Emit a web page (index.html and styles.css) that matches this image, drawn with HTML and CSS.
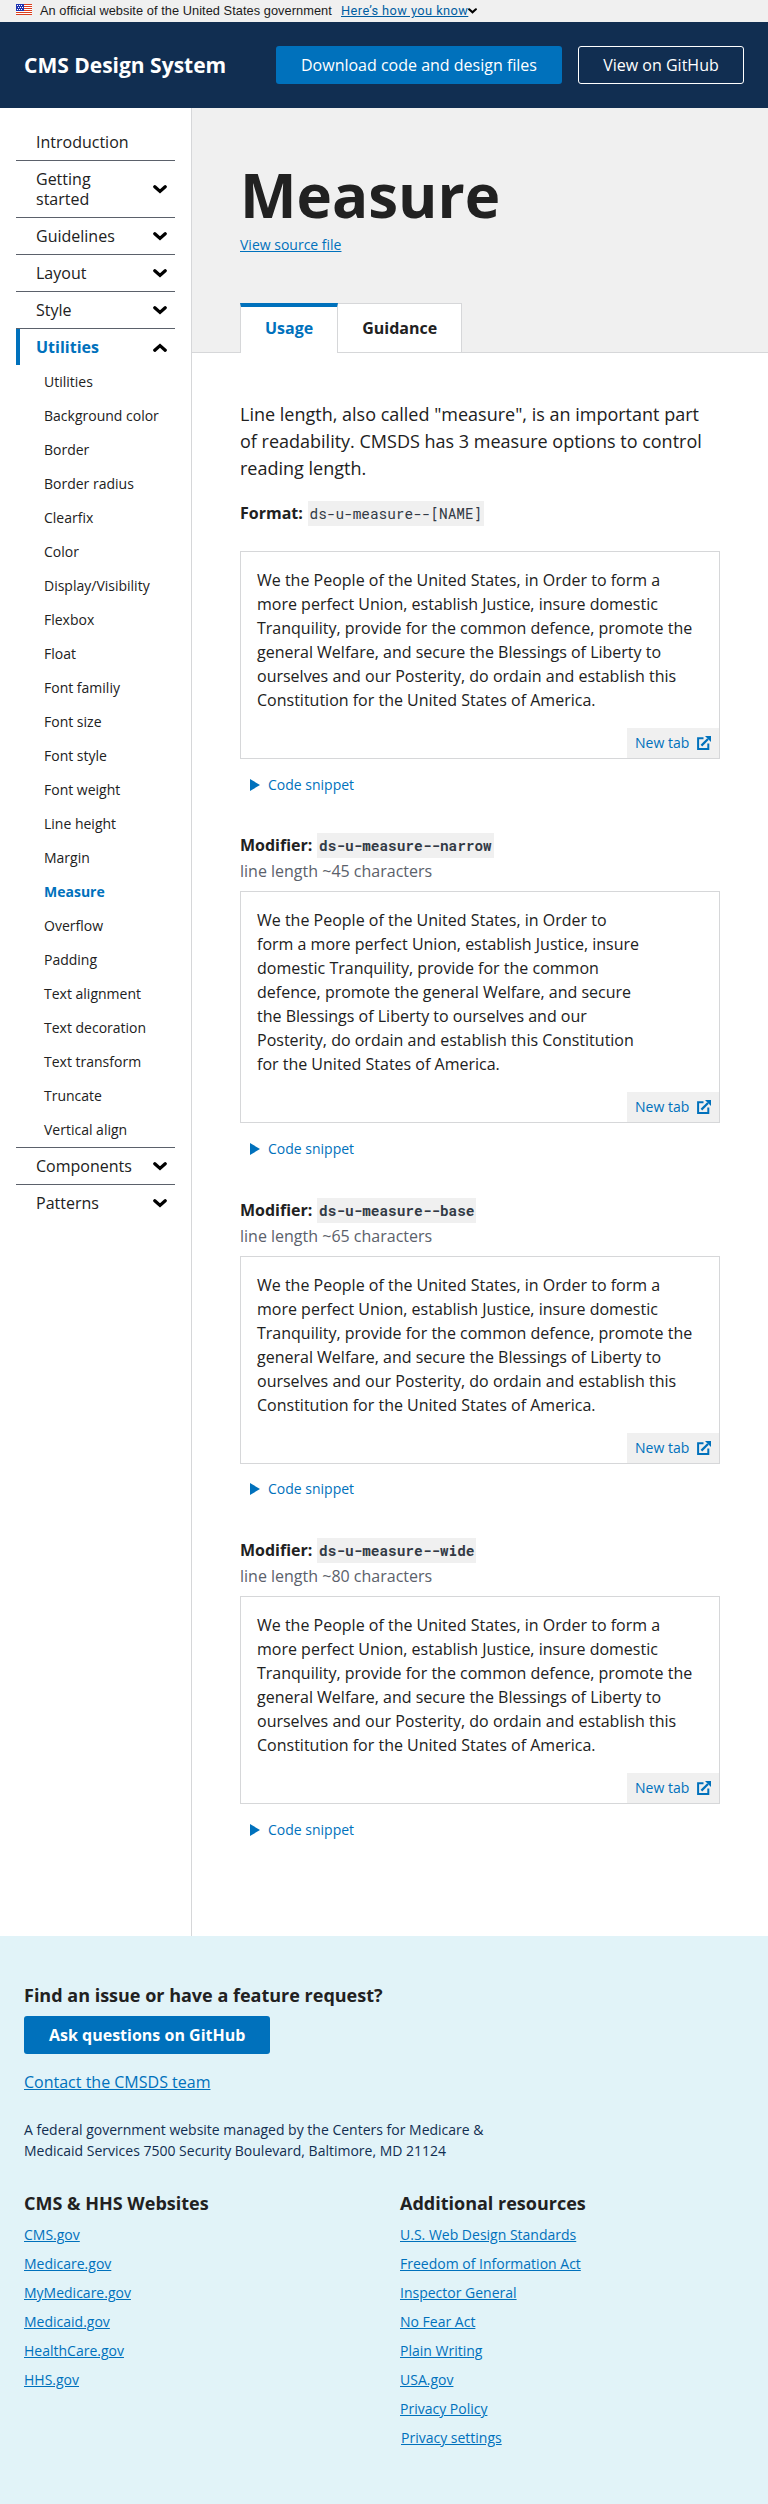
FILE: index.html
```html
<!DOCTYPE html>
<html lang="en">
<head>
<meta charset="utf-8">
<title>Measure - CMS Design System</title>
<link rel="stylesheet" href="styles.css">
</head>
<body>
<svg width="0" height="0" class="defs" aria-hidden="true">
  <symbol id="chevron" viewBox="0 0 14 9"><path d="M1.8 1.8L7 6.4l5.2-4.6" fill="none" stroke="currentColor" stroke-width="3.3" stroke-linecap="round" stroke-linejoin="miter"/></symbol>
  <symbol id="newtab" viewBox="0 0 14 14"><path d="M6.5 2.2H1.1v10.7h10.2V7.6" fill="none" stroke="currentColor" stroke-width="2"/><path d="M4.4 9.6L11 3" fill="none" stroke="currentColor" stroke-width="2.2"/><path d="M8 0h6v6z" fill="currentColor"/></symbol>
</svg>
<div class="banner">
  <svg class="flag" width="16" height="11" viewBox="0 0 16 11"><path fill="#fff" d="M0 0h16v11H0z"/><path fill="#db3e1f" d="M0 0h16v1H0zM0 2h16v1H0zM0 4h16v1H0zM0 6h16v1H0zM0 8h16v1H0zM0 10h16v1H0z"/><path fill="#1e33b1" d="M0 0h8v7H0z"/><path fill="#fff" d="M1 1h1v1H1zM3 1h1v1H3zM5 1h1v1H5zM2 3h1v1H2zM4 3h1v1H4zM6 3h1v1H6zM1 5h1v1H1zM3 5h1v1H3zM5 5h1v1H5z"/></svg>
  <span class="banner-text">An official website of the United States government</span>
  <a class="banner-link" href="#">Here’s how you know</a>
  <svg class="banner-chevron" width="9" height="6"><use href="#chevron"/></svg>
</div>
<header class="header">
  <div class="brand">CMS Design System</div>
  <a class="button button-solid download" href="#">Download code and design files</a>
  <a class="button button-outline" href="#">View on GitHub</a>
</header>
<div class="layout">
  <nav class="sidebar">
    <a class="nav-item" href="#">Introduction</a>
    <a class="nav-item" href="#"><span>Getting started</span><svg class="chevron"><use href="#chevron"/></svg></a>
    <a class="nav-item" href="#">Guidelines<svg class="chevron"><use href="#chevron"/></svg></a>
    <a class="nav-item" href="#">Layout<svg class="chevron"><use href="#chevron"/></svg></a>
    <a class="nav-item" href="#">Style<svg class="chevron"><use href="#chevron"/></svg></a>
    <a class="nav-item nav-open" href="#">Utilities<svg class="chevron chevron-up"><use href="#chevron"/></svg></a>
    <ul class="subnav">
      <li>Utilities</li><li>Background color</li><li>Border</li><li>Border radius</li><li>Clearfix</li><li>Color</li><li>Display/Visibility</li><li>Flexbox</li><li>Float</li><li>Font familiy</li><li>Font size</li><li>Font style</li><li>Font weight</li><li>Line height</li><li>Margin</li><li class="current">Measure</li><li>Overflow</li><li>Padding</li><li>Text alignment</li><li>Text decoration</li><li>Text transform</li><li>Truncate</li><li>Vertical align</li>
    </ul>
    <a class="nav-item nav-after" href="#">Components<svg class="chevron"><use href="#chevron"/></svg></a>
    <a class="nav-item nav-last" href="#">Patterns<svg class="chevron"><use href="#chevron"/></svg></a>
  </nav>
  <main class="main">
    <div class="page-head">
      <h1>Measure</h1>
      <a class="source" href="#">View source file</a>
      <div class="tabs"><a class="tab tab-active" href="#">Usage</a><a class="tab" href="#">Guidance</a></div>
    </div>
    <div class="content">
      <p class="lead">Line length, also called "measure", is an important part of readability. CMSDS has 3 measure options to control reading length.</p>
      <p class="format"><b>Format:</b> <code>ds-u-measure--[NAME]</code></p>

      <div class="example">
        <p>We the People of the United States, in Order to form a more perfect Union, establish Justice, insure domestic Tranquility, provide for the common defence, promote the general Welfare, and secure the Blessings of Liberty to ourselves and our Posterity, do ordain and establish this Constitution for the United States of America.</p>
        <a class="newtab" href="#">New tab<svg width="14" height="14"><use href="#newtab"/></svg></a>
      </div>
      <div class="snippet"><svg width="10" height="12"><path d="M0 0l10 6-10 6z" fill="currentColor"/></svg>Code snippet</div>

      <h2>Modifier: <code>ds-u-measure--narrow</code></h2>
      <p class="note">line length ~45 characters</p>
      <div class="example">
        <p class="narrow">We the People of the United States, in Order to form a more perfect Union, establish Justice, insure domestic Tranquility, provide for the common defence, promote the general Welfare, and secure the Blessings of Liberty to ourselves and our Posterity, do ordain and establish this Constitution for the United States of America.</p>
        <a class="newtab" href="#">New tab<svg width="14" height="14"><use href="#newtab"/></svg></a>
      </div>
      <div class="snippet"><svg width="10" height="12"><path d="M0 0l10 6-10 6z" fill="currentColor"/></svg>Code snippet</div>

      <h2>Modifier: <code>ds-u-measure--base</code></h2>
      <p class="note">line length ~65 characters</p>
      <div class="example">
        <p>We the People of the United States, in Order to form a more perfect Union, establish Justice, insure domestic Tranquility, provide for the common defence, promote the general Welfare, and secure the Blessings of Liberty to ourselves and our Posterity, do ordain and establish this Constitution for the United States of America.</p>
        <a class="newtab" href="#">New tab<svg width="14" height="14"><use href="#newtab"/></svg></a>
      </div>
      <div class="snippet"><svg width="10" height="12"><path d="M0 0l10 6-10 6z" fill="currentColor"/></svg>Code snippet</div>

      <h2>Modifier: <code>ds-u-measure--wide</code></h2>
      <p class="note">line length ~80 characters</p>
      <div class="example">
        <p>We the People of the United States, in Order to form a more perfect Union, establish Justice, insure domestic Tranquility, provide for the common defence, promote the general Welfare, and secure the Blessings of Liberty to ourselves and our Posterity, do ordain and establish this Constitution for the United States of America.</p>
        <a class="newtab" href="#">New tab<svg width="14" height="14"><use href="#newtab"/></svg></a>
      </div>
      <div class="snippet"><svg width="10" height="12"><path d="M0 0l10 6-10 6z" fill="currentColor"/></svg>Code snippet</div>
    </div>
  </main>
</div>
<footer class="footer">
  <h3>Find an issue or have a feature request?</h3>
  <a class="button button-solid ask" href="#">Ask questions on GitHub</a>
  <a class="contact" href="#">Contact the CMSDS team</a>
  <p class="address">A federal government website managed by the Centers for Medicare &amp; Medicaid Services 7500 Security Boulevard, Baltimore, MD 21124</p>
  <div class="columns">
    <section>
      <h3>CMS &amp; HHS Websites</h3>
      <ul class="links">
        <li><a href="#">CMS.gov</a></li>
        <li><a href="#">Medicare.gov</a></li>
        <li><a href="#">MyMedicare.gov</a></li>
        <li><a href="#">Medicaid.gov</a></li>
        <li><a href="#">HealthCare.gov</a></li>
        <li><a href="#">HHS.gov</a></li>
      </ul>
    </section>
    <section>
      <h3>Additional resources</h3>
      <ul class="links">
        <li><a href="#">U.S. Web Design Standards</a></li>
        <li><a href="#">Freedom of Information Act</a></li>
        <li><a href="#">Inspector General</a></li>
        <li><a href="#">No Fear Act</a></li>
        <li><a href="#">Plain Writing</a></li>
        <li><a href="#">USA.gov</a></li>
        <li><a href="#">Privacy Policy</a></li>
        <li class="settings"><a href="#">Privacy settings</a></li>
      </ul>
    </section>
  </div>
</footer>
</body>
</html>
```

FILE: styles.css
```css
* { box-sizing: border-box; }
body { margin: 0; font: 16px/24px "Open Sans", sans-serif; color: #212121; background: #fff; }
h1, h2, h3, p, ul { margin: 0; padding: 0; }
ul { list-style: none; }
a { color: #0071bc; }
svg { display: block; flex: none; }
.defs { display: none; }

.banner { display: flex; height: 22px; padding-left: 16px; background: #f0f0f0; line-height: 22px; white-space: nowrap; }
.flag { margin: 4px 8px 0 0; }
.banner-text { width: 301px; font-family: "Liberation Sans", sans-serif; font-size: 12.8px; letter-spacing: .05px; color: #1b1b1b; }
.banner-link { width: 126px; font-family: Roboto, sans-serif; font-size: 12.8px; letter-spacing: .43px; color: #005ea2; }
.banner-chevron { margin: 8px 0 0 1px; color: #000; }

.header { display: flex; align-items: center; height: 86px; padding: 0 24px; background: #112e51; }
.brand { margin-right: auto; font-size: 21px; font-weight: 700; color: #fff; }
.button { height: 38px; padding: 0 24px; border: 1px solid transparent; border-radius: 3px; line-height: 36px; color: #fff; text-align: center; text-decoration: none; white-space: nowrap; }
.button-solid { background: #0071bc; }
.download { width: 286px; }
.button-outline { width: 166px; margin-left: 16px; border-color: #fff; }

.layout { display: flex; height: 1828px; }
.sidebar { flex: none; width: 192px; padding: 16px 16px 0; border-right: 1px solid #d6d7d9; }
.nav-item { display: flex; align-items: center; justify-content: space-between; padding: 8px 8px 8px 20px; border-bottom: 1px solid #5b616b; line-height: 20px; color: #212121; text-decoration: none; }
.nav-item span { width: 80px; }
.nav-open { height: 36px; padding-left: 16px; border-bottom: 0; border-left: 4px solid #0071bc; font-weight: 700; color: #0071bc; }
.nav-after { border-top: 1px solid #5b616b; }
.nav-last { border-bottom: 0; }
.chevron { width: 14px; height: 9px; color: #000; }
.chevron-up { transform: rotate(180deg); }
.subnav { padding-left: 28px; font-size: 14px; line-height: 18px; white-space: nowrap; }
.subnav li { padding: 8px 0; }
.current { font-weight: 700; color: #0071bc; }

.main { flex: 1; min-width: 0; }
.page-head { height: 245px; padding: 49px 48px 0; border-bottom: 1px solid #d6d7d9; background: #f0f0f0; }
h1 { font-size: 60px; line-height: 77px; font-weight: 700; }
.source { display: block; font-size: 14px; line-height: 21px; margin-bottom: 48px; }
.tabs { display: flex; height: 50px; }
.tab { height: 49px; padding: 0 24px; border: 1px solid #d6d7d9; border-bottom: 0; border-left: 0; line-height: 48px; font-weight: 700; color: #212121; background: #fff; text-decoration: none; }
.tab-active { height: 50px; border-top: 4px solid #0071bc; border-left: 1px solid #d6d7d9; line-height: 42px; color: #0071bc; }

.content { padding: 48px; }
.lead { font-size: 18px; line-height: 27px; }
.format { height: 25px; margin: 19px 0 25px; line-height: 24px; white-space: nowrap; }
code { display: inline-block; height: 25px; margin-left: .5px; padding: 0 2px; font-family: "Roboto Mono", "Liberation Mono", monospace; font-size: 14.4px; line-height: 25px; color: #323a45; background: #f0f0f0; }
.example { border: 1px solid #d6d7d9; padding: 16px 0 0 16px; }
.example p { width: 440px; }
.example .narrow { width: 386px; }
.newtab { display: flex; align-items: center; justify-content: space-between; width: 92px; height: 30px; margin: 16px 0 0 auto; padding: 0 8px; font-size: 14px; background: #f0f0f0; text-decoration: none; }
.snippet { display: flex; align-items: center; gap: 8px; height: 24px; margin: 13.6px 0 36.8px 10px; font-size: 14px; color: #0071bc; }
h2 { height: 25px; font-size: 16px; line-height: 24px; white-space: nowrap; }
.note { height: 33px; padding-top: 1px; color: #5b616b; }

.footer { display: flex; flex-direction: column; align-items: flex-start; height: 568px; padding: 48px 24px 0; background: #e1f3f8; }
h3 { font-size: 18px; line-height: 23px; }
.footer > h3 { margin: 0 0 9px; }
.ask { font-weight: 700; }
.contact { margin-top: 16px; }
.address { width: 480px; margin-top: 25px; font-size: 14px; line-height: 21px; color: #112e51; }
.columns { display: grid; grid-template-columns: 376px 1fr; margin-top: 31px; width: 100%; }
.links { margin-top: 9px; font-size: 14px; line-height: 21px; }
.links li { margin-bottom: 8px; }
.settings { padding-left: 1px; }
```
